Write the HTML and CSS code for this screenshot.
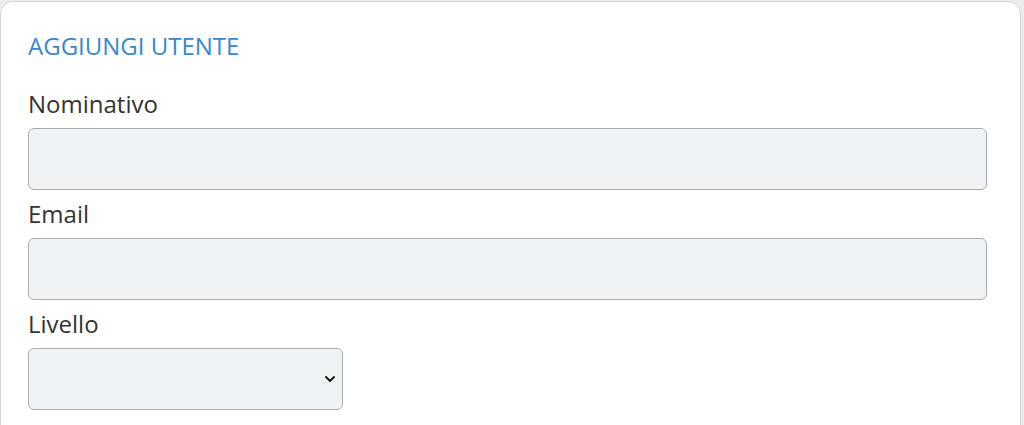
FILE: index.html
```html
<!DOCTYPE html>
<html lang="it">
<head>
<meta charset="utf-8">
<title>Aggiungi utente</title>
<link rel="stylesheet" href="styles.css">
</head>
<body>
<div class="page">
  <div class="card">
    <h2 class="card-title">AGGIUNGI UTENTE</h2>
    <form class="form">
      <label class="field-label" for="nominativo">Nominativo</label>
      <input class="field-input" id="nominativo" type="text">
      <label class="field-label" for="email">Email</label>
      <input class="field-input" id="email" type="email">
      <label class="field-label" for="livello">Livello</label>
      <div class="select-wrap">
        <select class="field-select" id="livello"><option></option></select>
        <svg class="chevron" viewBox="0 0 10 6" width="10" height="6" aria-hidden="true"><path d="M1 1 L5 5 L9 1" fill="none" stroke="#111" stroke-width="1.8" stroke-linecap="round" stroke-linejoin="round"/></svg>
      </div>
    </form>
  </div>
</div>
</body>
</html>
```

FILE: styles.css
```css
html, body {
  margin: 0;
  padding: 0;
  background: #ececec;
  height: 100%;
  overflow: hidden;
}
.page {
  padding-top: 1px;
  padding-right: 3px;
  height: 100%;
  box-sizing: border-box;
}
.card {
  background: #fff;
  border: 1px solid #d6d6d6;
  border-radius: 13px;
  padding: 26px 33px 40px 27px;
  min-height: 500px;
  font-family: "Open Sans", "Noto Sans", sans-serif;
}
.card-title {
  margin: 0;
  font-size: 24px;
  font-weight: 400;
  line-height: 36px;
  color: #3a87cd;
}
.form {
  display: flex;
  flex-direction: column;
  margin-top: 22px;
}
.field-label {
  font-size: 24px;
  line-height: 36px;
  color: #333;
  margin-bottom: 6px;
}
.field-input,
.field-select {
  box-sizing: border-box;
  height: 62px;
  background: #f0f3f5;
  border: 1.5px solid #acacac;
  border-radius: 6px;
  font: inherit;
  margin: 0 0 6px 0;
  padding: 0 12px;
  outline: none;
}
.field-input {
  width: 100%;
}
.select-wrap {
  position: relative;
  width: 315px;
}
.field-select {
  width: 100%;
  appearance: none;
  -webkit-appearance: none;
}
.chevron {
  position: absolute;
  right: 8px;
  top: 28px;
}
```
